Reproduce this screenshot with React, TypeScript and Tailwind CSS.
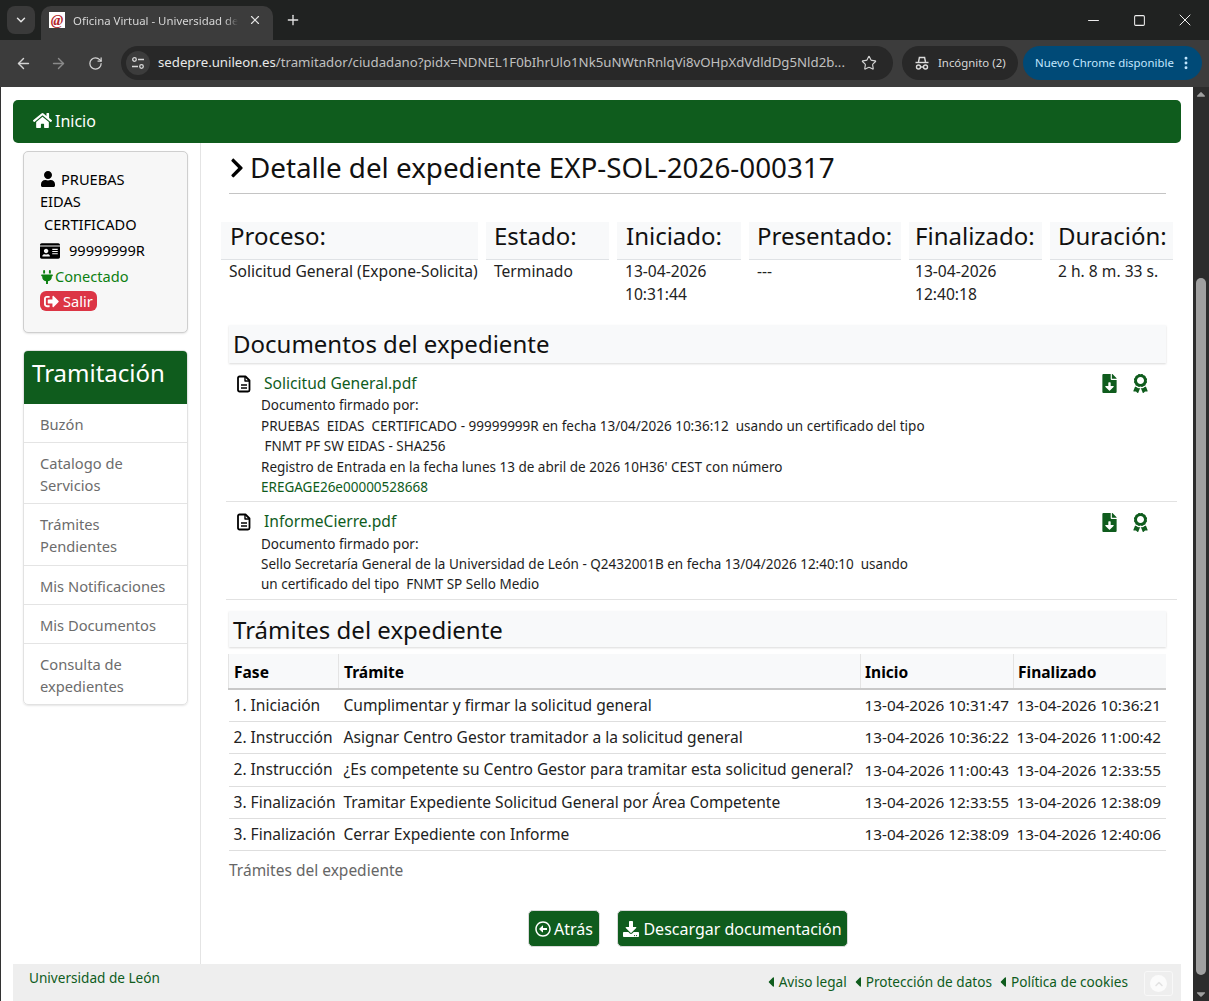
import {
  FaAward,
  FaCaretDown,
  FaCaretLeft,
  FaCaretUp,
  FaChevronRight,
  FaDownload,
  FaFileDownload,
  FaHome,
  FaIdCard,
  FaPlug,
  FaRegArrowAltCircleLeft,
  FaSignOutAlt,
  FaUser,
} from 'react-icons/fa'
import {
  ArrowLeft,
  ArrowRight,
  ChevronDown,
  ChevronUp,
  EllipsisVertical,
  Minus,
  Plus,
  RotateCw,
  Square,
  Star,
  X,
} from 'lucide-react'

const menu = [
  { label: ['Buzón'], pad: 'pb-[7px]' },
  { label: ['Catalogo de', 'Servicios'], pad: 'pb-[7px]' },
  { label: ['Trámites', 'Pendientes'], pad: 'pb-[8px]' },
  { label: ['Mis Notificaciones'], pad: 'pb-[7px]' },
  { label: ['Mis Documentos'], pad: 'pb-[7px]' },
  { label: ['Consulta de', 'expedientes'], pad: 'pb-[7px]' },
]

const info = [
  { title: 'Proceso:', width: 'w-[257px]', titlePad: 'pl-[9px]', valuePad: 'pl-[8px]', value: ['Solicitud General (Expone-Solicita)'] },
  { title: 'Estado:', width: 'w-[123px]', titlePad: 'pl-[8px]', valuePad: 'pl-[8px]', value: ['Terminado'] },
  { title: 'Iniciado:', width: 'w-[124px]', titlePad: 'pl-[9px]', valuePad: 'pl-[8px]', value: ['13-04-2026', '10:31:44'] },
  { title: 'Presentado:', width: 'w-[152px]', titlePad: 'pl-[8px]', valuePad: 'pl-[8px]', value: ['---'] },
  { title: 'Finalizado:', width: 'w-[133px]', titlePad: 'pl-[6px]', valuePad: 'pl-[6px]', value: ['13-04-2026', '12:40:18'] },
  { title: 'Duración:', width: 'w-[123px]', titlePad: 'pl-[8px]', valuePad: 'pl-[8px]', value: ['2 h. 8 m. 33 s.'] },
]

const tramites = [
  ['1. Iniciación', 'Cumplimentar y firmar la solicitud general', '13-04-2026 10:31:47', '13-04-2026 10:36:21'],
  ['2. Instrucción', 'Asignar Centro Gestor tramitador a la solicitud general', '13-04-2026 10:36:22', '13-04-2026 11:00:42'],
  ['2. Instrucción', '¿Es competente su Centro Gestor para tramitar esta solicitud general?', '13-04-2026 11:00:43', '13-04-2026 12:33:55'],
  ['3. Finalización', 'Tramitar Expediente Solicitud General por Área Competente', '13-04-2026 12:33:55', '13-04-2026 12:38:09'],
  ['3. Finalización', 'Cerrar Expediente con Informe', '13-04-2026 12:38:09', '13-04-2026 12:40:06'],
]

function IncognitoIcon() {
  return (
    <svg width="16" height="16" viewBox="0 0 16 16" fill="none" stroke="#dcdcdc" strokeWidth="1.4">
      <path d="M4.5 7 5.4 2.5h5.2L11.5 7" />
      <path d="M1.5 7.5h13" />
      <circle cx="4.5" cy="12" r="2" />
      <circle cx="11.5" cy="12" r="2" />
      <path d="M6.5 12h3" />
    </svg>
  )
}

function TuneIcon() {
  return (
    <svg width="14" height="14" viewBox="0 0 14 14" fill="none" stroke="#d8d8d8" strokeWidth="1.3">
      <circle cx="3.5" cy="3.5" r="1.8" />
      <path d="M7 3.5h6M1 10.5h6" />
      <circle cx="10.5" cy="10.5" r="1.8" />
    </svg>
  )
}

function FileIcon() {
  return (
    <svg width="16" height="18" viewBox="0 0 16 18" fill="none" stroke="#000" strokeWidth="1.8" strokeLinejoin="round">
      <path d="M3.5 1.5h6l4 4v9.5a1.5 1.5 0 0 1-1.5 1.5H3.500a1.500 1.500 0 0 1-1.500-1.500V3a1.500 1.500 0 0 1 1.500-1.500z" />
      <path d="M9 1.500V6h4.500" strokeWidth="1.4" />
      <path d="M5 10h6M5 13h6" strokeWidth="1.5" />
    </svg>
  )
}

function BrowserChrome() {
  return (
    <>
      <div className="h-10 bg-[#202221] flex items-end pl-[7px] shrink-0">
        <div className="w-7 h-7 mb-[6px] rounded-lg bg-[#3a3a3a] flex items-center justify-center">
          <ChevronDown size={14} strokeWidth={2.5} className="text-[#e4e4e4]" />
        </div>
        <div className="ml-[6px] w-[232px] h-[34px] bg-[#3c3c3c] rounded-t-[10px] flex items-center pl-[8px] pr-[11px] pb-[6px]">
          <div className="w-4 h-4 bg-white flex items-center justify-center text-[15px] leading-none italic font-bold text-[#b3262c] font-['Liberation_Serif',serif]">
            @
          </div>
          <span className="ml-2 mt-[1px] w-[165px] text-[11.4px] text-[#d6d6d6] whitespace-nowrap [mask-image:linear-gradient(to_right,black_92%,transparent)]">
            Oficina Virtual - Universidad de
          </span>
          <X size={14} strokeWidth={2} className="ml-auto text-[#e4e4e4]" />
        </div>
        <Plus size={16} strokeWidth={2} className="ml-[12px] mb-[12px] text-[#e4e4e4]" />
        <div className="ml-auto h-full flex items-center text-[#f0f0f0] pr-[1px]">
          <div className="w-[46px] flex justify-center">
            <Minus size={17} strokeWidth={1.4} />
          </div>
          <div className="w-[46px] flex justify-center">
            <Square size={13} strokeWidth={1.9} />
          </div>
          <div className="w-[46px] flex justify-center">
            <X size={20} strokeWidth={1.2} />
          </div>
        </div>
      </div>
      <div className="h-[47px] bg-[#3c3c3c] flex items-center shrink-0 pl-[15px] pr-[7px] pb-[1px]">
        <ArrowLeft size={17} strokeWidth={2} className="text-[#d4d4d4]" />
        <ArrowRight size={17} strokeWidth={2} className="ml-[18px] text-[#8a8a8a]" />
        <RotateCw size={15} strokeWidth={2} className="ml-[21px] text-[#d4d4d4]" />
        <div className="ml-[18px] w-[772px] h-[34px] rounded-full bg-[#282828] flex items-center pl-[5px] pr-4">
          <div className="w-6 h-6 rounded-full bg-[#3c3c3c] flex items-center justify-center">
            <TuneIcon />
          </div>
          <span className="ml-2 text-[13.23px] text-[#e8e8e8] whitespace-nowrap">
            sedepre.unileon.es<span className="text-[#c0c0c0]">/tramitador/ciudadano?pidx=NDNEL1F0bIhrUlo1Nk5uNWtnRnlqVi8vOHpXdVdldDg5Nld2b...</span>
          </span>
          <Star size={16} strokeWidth={1.7} className="ml-auto text-[#d4d4d4]" />
        </div>
        <div className="ml-[9px] w-[116px] h-[34px] rounded-full bg-[#282828] flex items-center pl-[12px] text-[#d8d8d8]">
          <IncognitoIcon />
          <span className="ml-[8px] text-[11.4px] whitespace-nowrap">Incógnito (2)</span>
        </div>
        <div className="ml-[5px] w-[179px] h-[34px] rounded-full bg-[#004a77] flex items-center pl-[12px] text-[#c2e7ff]">
          <span className="text-[11.4px] whitespace-nowrap">Nuevo Chrome disponible</span>
          <EllipsisVertical size={16} strokeWidth={2.4} className="ml-auto mr-[8px]" />
        </div>
      </div>
    </>
  )
}

function UserCard() {
  return (
    <div className="h-[182px] rounded-[5px] border border-[#cfcfcf] bg-[#f7f7f7] shadow-[0_1px_2px_rgba(0,0,0,0.1)] pl-4 pt-[15px] text-[14.6px] leading-[23px] text-black">
      <div className="flex items-center gap-[5px] h-[23px]">
        <FaUser size={16} />
        <span className="mt-[1px]">PRUEBAS</span>
      </div>
      <div>EIDAS</div>
      <div className="pl-1">CERTIFICADO</div>
      <div className="flex items-center gap-[9px] mt-[3px]">
        <FaIdCard size={20} />
        <span>99999999R</span>
      </div>
      <div className="flex items-center text-[#0d8012] mt-[3px]">
        <FaPlug size={14} className="scale-x-110" />
        <span className="ml-[1px]">Conectado</span>
      </div>
      <div className="mt-[3px] w-[57px] h-5 rounded-[6px] bg-[#dc3545] text-white flex items-center pl-1 gap-[4px]">
        <FaSignOutAlt size={15} />
        <span>Salir</span>
      </div>
    </div>
  )
}

function SideMenu() {
  return (
    <div className="mt-[17px] rounded-[5px] border border-[#e2e2e2] shadow-[0_1px_2px_rgba(0,0,0,0.1)] overflow-hidden">
      <div className="h-[53px] bg-[#0f5c1d] text-white text-[24px] flex items-center pl-2 pb-[10px]">Tramitación</div>
      {menu.map((item) => (
        <div
          key={item.label[0]}
          className={`border-b last:border-b-0 border-[#e4e4e4] px-4 pt-[9px] ${item.pad} text-[14.7px] leading-[22px] text-[#6c6c6c]`}
        >
          {item.label.map((line) => (
            <div key={line}>{line}</div>
          ))}
        </div>
      ))}
    </div>
  )
}

function DocIcons() {
  return (
    <div className="ml-auto flex items-center gap-[12px] pr-[27px] text-[#0f5c1d]">
      <FaFileDownload size={19} />
      <FaAward size={19} />
    </div>
  )
}

function Documents() {
  return (
    <>
      <h2 className="ml-[8px] mr-[15px] h-[38px] bg-[#f8f9fa] text-[24px] leading-[38px] pl-[4px] shadow-[0_1px_2px_rgba(0,0,0,0.15)] mt-[-1px] text-[#111] shrink-0">
        Documentos del expediente
      </h2>
      <div className="ml-[5px] mr-[4px] border-b border-[#e2e2e2] h-[139px] pt-[9px] shrink-0">
        <div className="flex items-center h-[23px] pl-[10px]">
          <FileIcon />
          <a className="ml-[12px] text-[15.6px] text-[#0f5c1d]">Solicitud General.pdf</a>
          <DocIcons />
        </div>
        <div className="pl-[35px] text-[13.5px] leading-[20.5px] text-[#1e1e1e]">
          <div>Documento firmado por:</div>
          <div>PRUEBAS&nbsp; EIDAS&nbsp; CERTIFICADO - 99999999R en fecha 13/04/2026 10:36:12&nbsp; usando un certificado del tipo</div>
          <div>&nbsp;FNMT PF SW EIDAS - SHA256</div>
          <div>Registro de Entrada en la fecha lunes 13 de abril de 2026 10H36' CEST con número</div>
          <div className="text-[#0f5c1d]">EREGAGE26e00000528668</div>
        </div>
      </div>
      <div className="ml-[5px] mr-[4px] border-b border-[#e2e2e2] h-[98px] pt-[8px] shrink-0">
        <div className="flex items-center h-[24px] pl-[10px]">
          <FileIcon />
          <a className="ml-[12px] text-[15.6px] text-[#0f5c1d]">InformeCierre.pdf</a>
          <DocIcons />
        </div>
        <div className="pl-[35px] text-[13.5px] leading-[20.2px] text-[#1e1e1e]">
          <div>Documento firmado por:</div>
          <div>Sello Secretaría General de la Universidad de León - Q2432001B en fecha 13/04/2026 12:40:10&nbsp; usando</div>
          <div>un certificado del tipo&nbsp; FNMT SP Sello Medio</div>
        </div>
      </div>
    </>
  )
}

function Tramites() {
  return (
    <>
      <h2 className="mt-[11px] ml-[8px] mr-[15px] h-[36px] bg-[#f8f9fa] text-[24px] leading-[38px] pl-[4px] shadow-[0_1px_2px_rgba(0,0,0,0.15)] text-[#111] shrink-0">
        Trámites del expediente
      </h2>
      <table className="mt-[7px] ml-[7px] w-[937px] table-fixed border-collapse text-[15.55px] text-[#222] shrink-0">
        <colgroup>
          <col className="w-[110px]" />
          <col className="w-[522px]" />
          <col className="w-[153px]" />
          <col className="w-[152px]" />
        </colgroup>
        <thead>
          <tr className="h-[35px] bg-[#f8f9fa] border-b-2 border-[#c8c8c8] text-black">
            <th className="text-left font-bold pl-[5px] pt-[4px] border-l border-r border-[#e4e4e4]">Fase</th>
            <th className="text-left font-bold pl-[5px] pt-[4px] border-r border-[#e4e4e4]">Trámite</th>
            <th className="text-left font-bold pl-[4px] pt-[4px] border-r border-[#e4e4e4]">Inicio</th>
            <th className="text-left font-bold pl-[4px] pt-[4px]">Finalizado</th>
          </tr>
        </thead>
        <tbody>
          {tramites.map((row) => (
            <tr key={row[1]} className="h-[32.4px] border-b border-[#dedede]">
              <td className="pl-[5px] whitespace-nowrap">{row[0]}</td>
              <td className="pl-[5px] whitespace-nowrap">{row[1]}</td>
              <td className="pl-[4px] whitespace-nowrap text-[15.3px]">{row[2]}</td>
              <td className="pl-[3px] whitespace-nowrap text-[15.3px]">{row[3]}</td>
            </tr>
          ))}
        </tbody>
      </table>
      <div className="ml-[8px] mt-[7px] text-[15.5px] leading-[24px] text-[#666] shrink-0">Trámites del expediente</div>
    </>
  )
}

function Footer() {
  return (
    <div className="h-[37px] mt-auto bg-[#eeeeee] flex items-start text-[13.6px] text-[#0f5c1d] shrink-0">
      <span className="ml-4 mt-[4px]">Universidad de León</span>
      <div className="ml-auto mt-[8px] flex items-center">
        {['Aviso legal', 'Protección de datos', 'Política de cookies'].map((t) => (
          <span key={t} className="flex items-center mr-[3px]">
            <FaCaretLeft size={16} />
            {t}
          </span>
        ))}
      </div>
      <div className="ml-[13px] mr-[8px] mt-[7px] w-[29px] h-[25px] rounded-[3px] border border-[#f8f8f8] flex items-center justify-center">
        <div className="w-[17px] h-[17px] rounded-full bg-[#fbfbfb] flex items-center justify-center">
          <ChevronUp size={12} strokeWidth={3} className="text-[#e2e2e2]" />
        </div>
      </div>
    </div>
  )
}

export default function App() {
  return (
    <div className="w-[1209px] h-[1001px] overflow-hidden flex flex-col bg-white font-['Noto_Sans',sans-serif]">
      <BrowserChrome />
      <div className="flex-1 flex min-h-0">
        <div className="w-[1193px] flex flex-col pl-[12px] pr-3 pt-[13px] border-l border-[#333]">
          <div className="h-[43px] bg-[#0f5c1d] rounded-[5px] flex items-center pl-5 pb-[2px] text-white text-[16px] shrink-0">
            <FaHome size={19} />
            <span className="ml-[3px]">Inicio</span>
          </div>
          <div className="flex-1 flex min-h-0">
            <div className="w-[188px] shrink-0 border-r border-[#e4e4e4] pl-[10px] pr-3 pt-2">
              <div className="w-[165px]">
                <UserCard />
                <SideMenu />
              </div>
            </div>
            <div className="flex-1 min-w-0 pl-5 flex flex-col">
              <div className="ml-2 mr-[15px] h-[51px] border-b border-[#c4c4c4] flex items-center gap-[2px] text-black shrink-0">
                <FaChevronRight size={22} className="-ml-[3px]" />
                <h1 className="text-[27.8px] leading-none text-[#111]">Detalle del expediente EXP-SOL-2026-000317</h1>
              </div>
              <div className="mt-[28px] flex gap-2 shrink-0">
                {info.map((col) => (
                  <div key={col.title} className={col.width}>
                    <div className={`h-[38px] bg-[#f8f9fa] border-b border-[#dfe2e5] text-[24px] leading-[28px] ${col.titlePad} text-[#111]`}>
                      {col.title}
                    </div>
                    <div className={`${col.valuePad} text-[15.6px] leading-[23px] text-[#222] whitespace-nowrap h-[66px]`}>
                      {col.value.map((line) => (
                        <div key={line}>{line}</div>
                      ))}
                    </div>
                  </div>
                ))}
              </div>
              <Documents />
              <Tramites />
              <div className="mt-[28px] flex justify-center gap-[17px] pr-[26px] text-white text-[16px] shrink-0">
                <div className="h-[37px] w-[72px] shrink-0 pt-[1px] rounded-[5px] border border-[#d9d9d9] bg-[#0f5c1d] flex items-center justify-center gap-[3px]">
                  <FaRegArrowAltCircleLeft size={16} />
                  Atrás
                </div>
                <div className="h-[37px] w-[231px] shrink-0 pt-[1px] rounded-[5px] border border-[#d9d9d9] bg-[#0f5c1d] flex items-center justify-center gap-[4px]">
                  <FaDownload size={16} />
                  Descargar documentación
                </div>
              </div>
            </div>
          </div>
          <Footer />
        </div>
        <div className="w-[16px] bg-[#2c2c2c] flex flex-col items-center shrink-0">
          <FaCaretUp size={14} className="text-[#a0a0a0]" />
          <div className="mt-[177px] w-[10px] h-[697px] rounded-full bg-[#a0a0a0]" />
          <FaCaretDown size={14} className="mt-auto text-[#a0a0a0]" />
        </div>
      </div>
    </div>
  )
}
